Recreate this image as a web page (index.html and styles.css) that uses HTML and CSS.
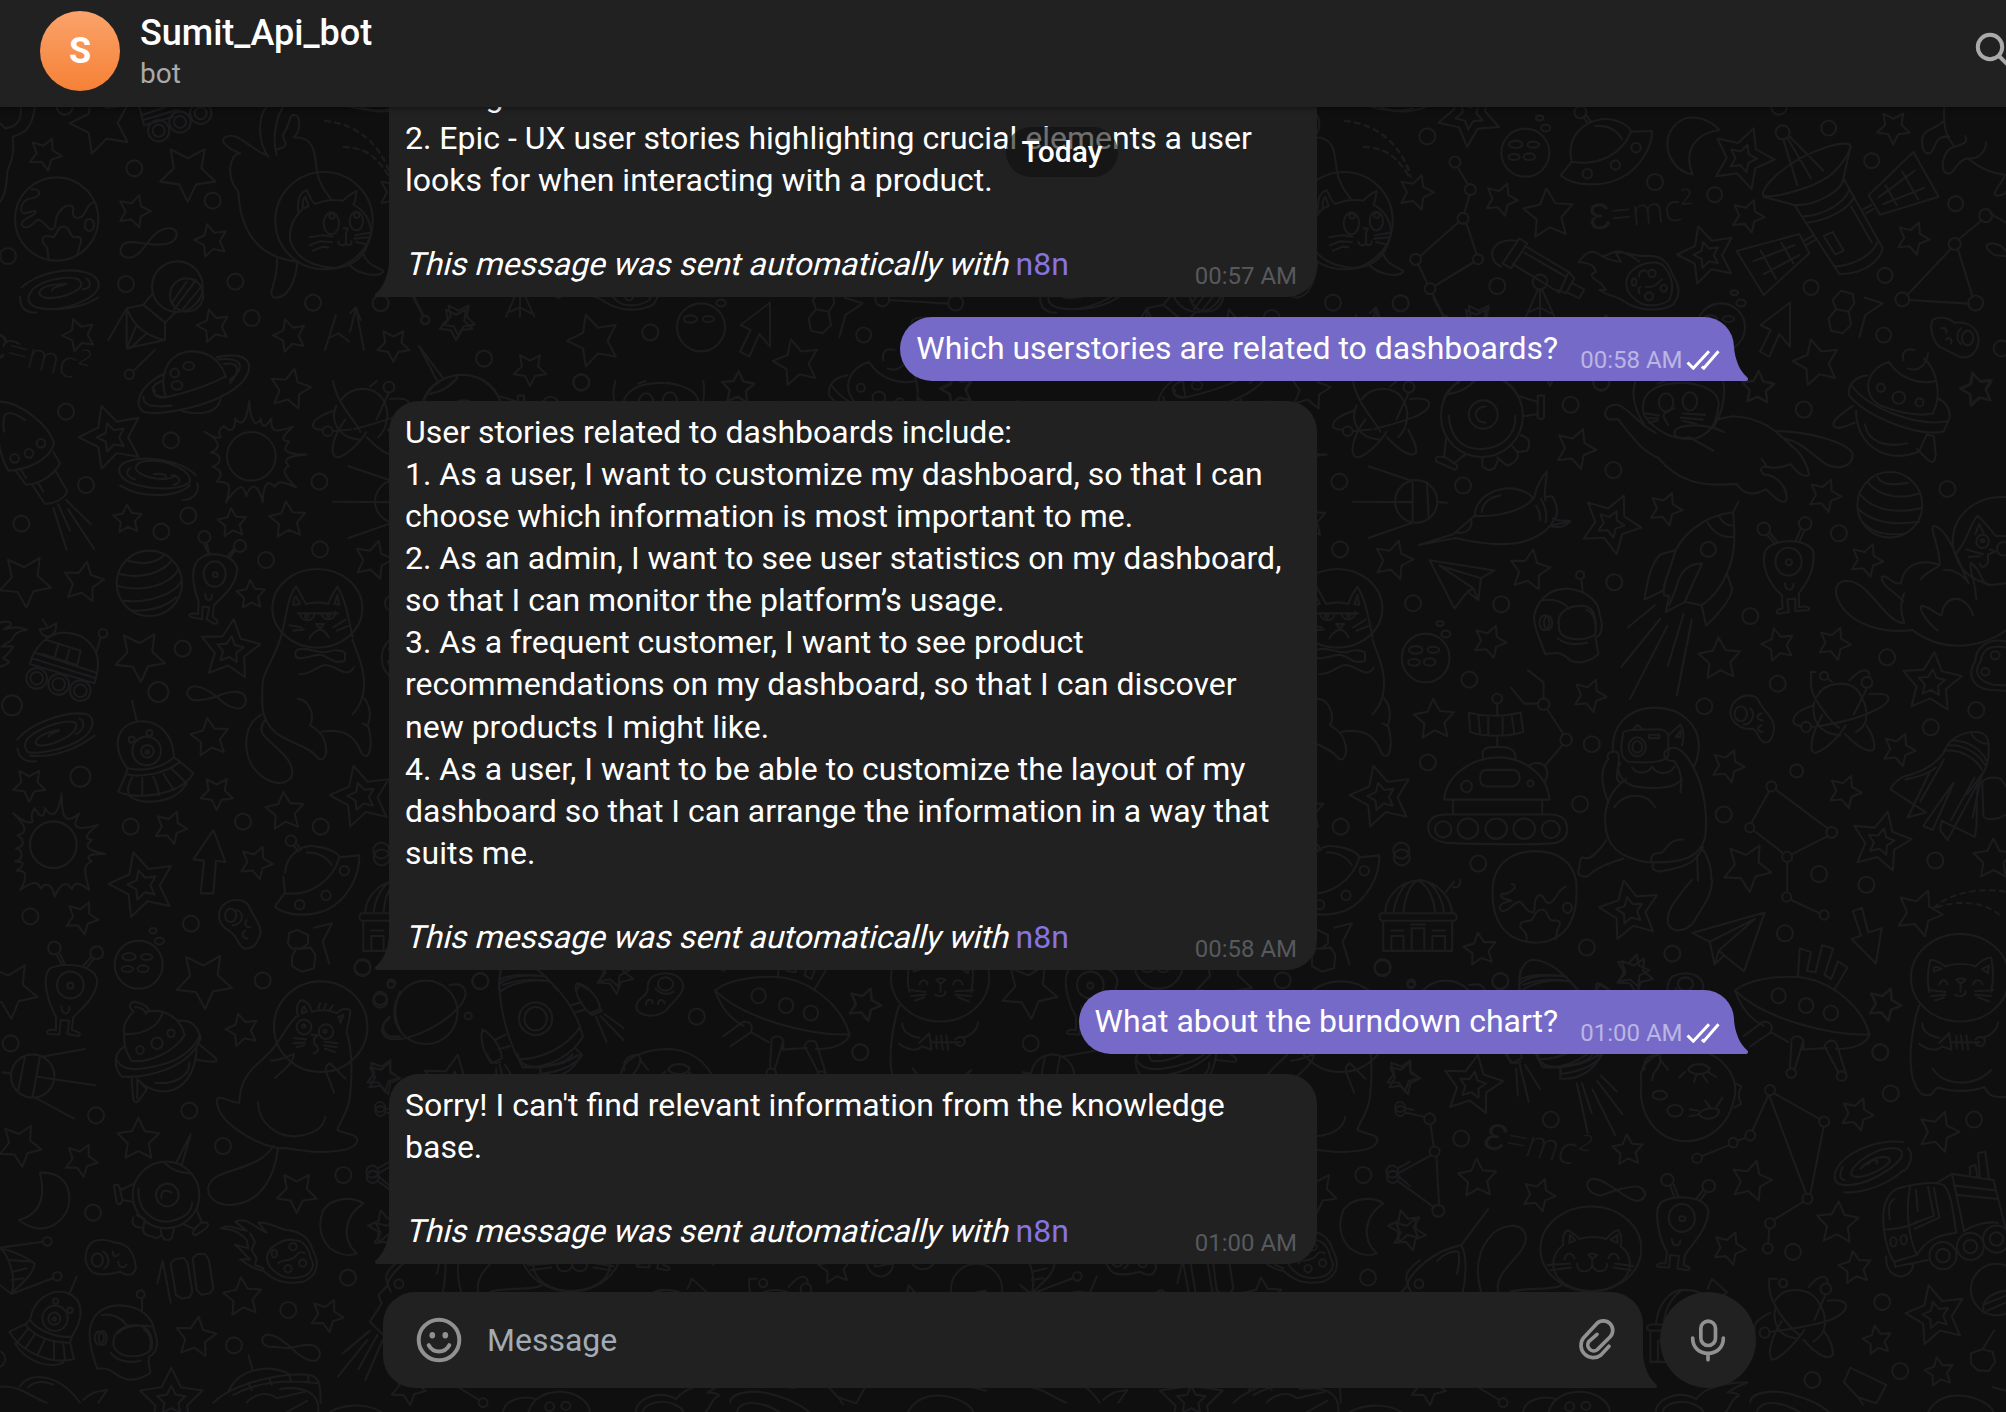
FILE: index.html
```html
<!DOCTYPE html>
<html lang="en">
<head>
<meta charset="utf-8">
<title>Sumit_Api_bot</title>
<link rel="stylesheet" href="styles.css">
</head>
<body>
<svg class="wallpaper" id="wallpaper" aria-hidden="true"></svg>
<div class="chat">
  <header class="topbar">
    <div class="avatar">S</div>
    <div class="peer">
      <div class="peer-name">Sumit_Api_bot</div>
      <div class="peer-status">bot</div>
    </div>
    <svg class="search" viewBox="0 0 40 40"><circle cx="16" cy="16" r="12.2"/><path d="M25 25L37 37"/></svg>
  </header>

  <main class="messages">
    <div class="date-pill">Today</div>

    <div class="bubble in">management.<br>2. Epic - UX user stories highlighting crucial elements a user<br>looks for when interacting with a product.<br><br><em>This message was sent automatically with </em><a class="link">n8n</a>
      <span class="time">00:57 AM</span>
      <svg class="tail" viewBox="0 0 9 17"><path d="M3 17h6V0c-.193 2.84-.876 5.767-2.05 8.782-.904 2.325-2.446 4.485-4.625 6.48A1 1 0 003 17z"/></svg>
    </div>

    <div class="bubble out"><span>Which userstories are related to dashboards?</span>
      <span class="meta"><span class="time">00:58 AM</span><svg class="ticks" viewBox="0 0 34 20"><path d="M1.5 12.5L7.3 18.2L23 1.3M15.8 16.6L17.8 18.2L32.5 1.3"/></svg></span>
      <svg class="tail" viewBox="0 0 9 17"><path d="M6 17H0V0c.193 2.84.876 5.767 2.05 8.782.904 2.325 2.446 4.485 4.625 6.48A1 1 0 016 17z"/></svg>
    </div>

    <div class="bubble in">User stories related to dashboards include:<br>1. As a user, I want to customize my dashboard, so that I can<br>choose which information is most important to me.<br>2. As an admin, I want to see user statistics on my dashboard,<br>so that I can monitor the platform’s usage.<br>3. As a frequent customer, I want to see product<br>recommendations on my dashboard, so that I can discover<br>new products I might like.<br>4. As a user, I want to be able to customize the layout of my<br>dashboard so that I can arrange the information in a way that<br>suits me.<br><br><em>This message was sent automatically with </em><a class="link">n8n</a>
      <span class="time">00:58 AM</span>
      <svg class="tail" viewBox="0 0 9 17"><path d="M3 17h6V0c-.193 2.84-.876 5.767-2.05 8.782-.904 2.325-2.446 4.485-4.625 6.48A1 1 0 003 17z"/></svg>
    </div>

    <div class="bubble out"><span>What about the burndown chart?</span>
      <span class="meta"><span class="time">01:00 AM</span><svg class="ticks" viewBox="0 0 34 20"><path d="M1.5 12.5L7.3 18.2L23 1.3M15.8 16.6L17.8 18.2L32.5 1.3"/></svg></span>
      <svg class="tail" viewBox="0 0 9 17"><path d="M6 17H0V0c.193 2.84.876 5.767 2.05 8.782.904 2.325 2.446 4.485 4.625 6.48A1 1 0 016 17z"/></svg>
    </div>

    <div class="bubble in">Sorry! I can't find relevant information from the knowledge<br>base.<br><br><em>This message was sent automatically with </em><a class="link">n8n</a>
      <span class="time">01:00 AM</span>
      <svg class="tail" viewBox="0 0 9 17"><path d="M3 17h6V0c-.193 2.84-.876 5.767-2.05 8.782-.904 2.325-2.446 4.485-4.625 6.48A1 1 0 003 17z"/></svg>
    </div>
  </main>

  <footer class="composer">
    <div class="field">
      <svg class="icon smile" viewBox="0 0 48 48"><circle cx="24" cy="24" r="20.3"/><path d="M13.7 29.2C18.5 37.6 29.5 37.6 34.3 29.2"/><ellipse class="eye" cx="17.3" cy="19.2" rx="2.8" ry="3.2"/><ellipse class="eye" cx="30.3" cy="19.2" rx="2.8" ry="3.2"/></svg>
      <span class="placeholder">Message</span>
      <svg class="icon clip" viewBox="49 97 122 136"><path d="M148 185L124 211A37 37 0 0 1 72 159L111 117A28 28 0 0 1 151 157L113 195A18 18 0 0 1 87 171L112 149"/></svg>
      <svg class="tail" viewBox="0 0 9 17"><path d="M6 17H0V0c.193 2.84.876 5.767 2.05 8.782.904 2.325 2.446 4.485 4.625 6.48A1 1 0 016 17z"/></svg>
    </div>
    <div class="mic"><svg class="icon" viewBox="385 95 120 138"><rect x="423.5" y="107.5" width="44" height="73" rx="22"/><path d="M399 158C399 188 420 204 445 204C470 204 491 188 491 158M445 204V223"/></svg></div>
  </footer>
</div>
<script src="wallpaper.js"></script>
</body>
</html>
```

FILE: styles.css
```css
* { box-sizing: border-box; }

body {
  margin: 0;
  background: #0f0f0f;
  color: #fff;
  font-family: Roboto, "Liberation Sans", sans-serif;
  overflow: hidden;
}

.wallpaper {
  position: absolute;
  left: 0;
  top: 0;
  width: 2006px;
  height: 1412px;
  fill: none;
  stroke: #1c1c1e;
  stroke-width: 2.1;
  stroke-linecap: round;
  stroke-linejoin: round;
}
.wallpaper * { vector-effect: non-scaling-stroke; }
.wallpaper text {
  fill: #1c1c1e;
  stroke: none;
  font: 300 40px "Open Sans", sans-serif;
}

.chat {
  position: relative;
  display: flex;
  flex-direction: column;
  width: 2006px;
  height: 1412px;
}

.topbar {
  position: relative;
  z-index: 2;
  flex: none;
  display: flex;
  align-items: flex-start;
  height: 107px;
  padding: 11px 0 0 40px;
  background: #212121;
  box-shadow: 0 2px 4px rgba(0, 0, 0, .35);
}
.avatar {
  display: grid;
  place-items: center;
  width: 80px;
  height: 80px;
  border-radius: 50%;
  background: linear-gradient(#faa36b, #f68136);
  font-size: 36px;
  font-weight: 700;
}
.peer { margin-left: 20px; }
.peer-name {
  font-size: 36px;
  font-weight: 500;
  line-height: 44px;
}
.peer-status {
  color: #aaa;
  font-size: 28px;
  line-height: 38px;
}
.search {
  width: 40px;
  height: 40px;
  margin: 20px -8px 0 auto;
  flex: none;
  fill: none;
  stroke: #aaa;
  stroke-width: 4;
}

.messages {
  position: relative;
  flex: 1;
  min-height: 0;
  display: flex;
  flex-direction: column;
  justify-content: flex-end;
  gap: 20px;
  width: 1345px;
  margin-left: 389px;
  padding-bottom: 28px;
}

.date-pill {
  position: absolute;
  z-index: 1;
  left: 617px;
  top: 20px;
  width: 112px;
  height: 50px;
  border-radius: 25px;
  background: rgba(15, 15, 15, .6);
  font-size: 30px;
  font-weight: 500;
  line-height: 50px;
  text-align: center;
}

.bubble {
  position: relative;
  flex: none;
  font-size: 32px;
  line-height: 42.04px;
  padding: 10px 16px 12px;
  white-space: nowrap;
}
.bubble.in {
  align-self: flex-start;
  width: 928px;
  background: #212121;
  border-radius: 30px 30px 30px 0;
}
.bubble.out {
  align-self: flex-end;
  display: flex;
  justify-content: space-between;
  height: 64px;
  background: #766ac8;
  border-radius: 32px 30px 0 32px;
}
/* Slanted upright letters keep the advance widths of the body text. */
.bubble em {
  display: inline-block;
  font-style: normal;
  white-space: pre;
  transform: skewX(-14deg);
  transform-origin: 0 32px;
}
.link { color: #8774e1; }

.time {
  font-size: 24px;
  line-height: 28px;
}
.in .time {
  position: absolute;
  right: 20px;
  bottom: 7px;
  color: #56595e;
}
.meta {
  display: flex;
  align-items: center;
  align-self: flex-end;
  height: 28px;
  margin: 0 -2px -5px 22px;
}
.out .time { color: #bbb5e4; }
.ticks {
  width: 34px;
  height: 20px;
  margin-left: 3.5px;
  fill: none;
  stroke: #fff;
  stroke-width: 3;
}

.tail {
  position: absolute;
  bottom: 0;
  width: 18px;
  height: 34px;
}
.in .tail { right: 100%; fill: #212121; }
.out .tail { left: 100%; fill: #766ac8; }

.composer {
  flex: none;
  display: flex;
  gap: 17px;
  height: 120px;
  padding-left: 383px;
}
.field {
  position: relative;
  display: flex;
  align-items: center;
  width: 1260px;
  height: 96px;
  padding: 0 26px 0 32px;
  background: #212121;
  border-radius: 32px 32px 0 32px;
}
.field .tail { left: 100%; fill: #212121; }
.icon {
  fill: none;
  stroke: #919191;
  stroke-linecap: round;
}
.smile { width: 48px; height: 48px; stroke-width: 4; }
.smile .eye { fill: #919191; stroke: none; }
.placeholder {
  flex: 1;
  margin-left: 24px;
  color: #a2acb4;
  font-size: 32px;
}
.clip { width: 40.7px; height: 45.3px; stroke-width: 11; }
.mic {
  display: grid;
  place-items: center;
  width: 96px;
  height: 96px;
  border-radius: 50%;
  background: #212121;
}
.mic .icon { width: 40px; height: 46px; stroke-width: 11; }
```

FILE: wallpaper.js
```js
// Space doodles. The tile is 1020px wide and repeats across the chat.
// Every sheet has its own origin (ox, oy) and units per pixel (kx, ky).
const sheets = [
  {
    ox: 0, oy: 0, kx: 3, ky: 3,
    dots: [[194,320],[403,505],[638,602],[24,768],[378,852],[706,845],[939,908],[1142,910],[755,954]],
    stars: [[305,370,32,-18],[135,462,17,25],[563,518,29,36],[402,634,17,18],[634,722,17,-15],[237,1005,17,-20],[640,978,17,-15],[870,1007,17,-17],[1180,1035,17,36]],
    art: `
      <circle cx="170" cy="657" r="125"/>
      <path d="M95 568C125 565 125 590 95 595C60 600 55 640 75 640C100 635 110 625 105 640C90 655 65 655 65 675C75 690 90 680 105 665C120 650 130 670 150 688C175 690 160 660 175 640C190 615 215 610 220 625C215 650 225 660 245 650C260 640 260 610 280 608"/>
      <path d="M145 775C140 750 150 750 130 730C120 705 140 705 160 712C175 700 170 680 190 680C210 680 205 700 220 712C250 705 245 725 238 740L232 765"/>
      <ellipse cx="268" cy="675" rx="14" ry="18"/>
      <path d="M400 770C370 780 355 760 365 740C375 718 410 728 445 732C480 736 525 735 530 705C530 680 500 680 475 695C445 712 435 755 400 770Z"/>
      <path d="M65 862C110 820 200 800 260 818C310 835 305 870 265 895C210 925 150 935 110 922C75 910 80 885 105 862C140 835 210 828 235 838C255 855 240 870 200 885C170 897 125 900 118 880C120 862 150 852 200 852M155 872C160 860 175 858 190 856M248 868C275 865 275 845 258 835M60 890C60 925 80 938 108 938M125 925C200 935 260 915 295 892"/>
      <circle cx="532" cy="860" r="76"/><circle cx="560" cy="885" r="50"/>
      <path d="M515 910L560 845M522 928L588 840M545 932L602 862M458 880L430 914L380 925L325 1020M430 914L495 968L525 938M495 968V1020L380 1045V925C400 975 440 1010 495 1020M380 1045L410 975M390 1045L440 1000"/>
      <circle cx="972" cy="662" r="146"/>
      <path d="M895 635C890 590 905 575 920 570C930 590 935 605 945 612C980 598 1005 598 1030 602C1040 590 1060 578 1070 573C1068 590 1066 605 1060 614C1090 630 1110 660 1114 695C1105 750 1075 795 1010 805C940 800 890 780 870 720C868 680 880 655 905 630M908 622C908 600 912 592 916 590L926 618L908 626"/>
      <ellipse cx="994" cy="670" rx="23" ry="33"/><ellipse cx="1069" cy="663" rx="20" ry="28"/><circle cx="996" cy="648" r="8"/><circle cx="1070" cy="646" r="8"/>
      <path d="M1030 685H1044L1038 700V725M1015 725C1018 740 1035 738 1038 728C1042 740 1056 736 1054 724M928 712L968 706L998 710M930 736L960 724L996 726M938 752L968 740L984 742M1065 706L1108 698M1062 716L1105 712M1068 726L1095 732"/>
      <path d="M800 465C760 455 720 400 685 408C655 415 670 440 720 460C690 460 675 530 715 575C720 680 760 770 892 785M805 470C770 420 775 350 800 320M830 465C815 410 830 350 850 320M830 448C870 440 855 430 848 405C870 380 865 340 885 345C905 350 900 400 880 412C940 410 945 450 950 510C955 550 980 580 995 600M830 770C840 830 800 880 820 892C860 900 885 850 892 790M1088 757C1100 800 1140 800 1150 815C1140 830 1080 830 1045 792"/>
      <path stroke-dasharray="5 5" d="M975 363C1060 370 1130 420 1170 515M1030 441C1090 440 1130 470 1165 525"/>
      <path d="M418 320L432 376L520 350M425 345L500 320M430 360L530 330M105 320C95 390 70 400 38 410C45 470 30 490 22 515C20 560 15 590 0 605M62 320C65 350 60 380 15 385L0 370"/>
      <circle cx="476" cy="392" r="32"/><circle cx="476" cy="392" r="18"/><circle cx="540" cy="366" r="32"/><circle cx="540" cy="366" r="18"/><circle cx="602" cy="340" r="32"/><circle cx="602" cy="340" r="18"/>
      <path d="M975 1050L1008 945M1050 995L1068 925L1092 1050M985 1015L1015 1000L1048 1025M1240 895L1270 948"/><circle cx="1275" cy="960" r="13"/>
      <path d="M10 1040C15 1020 40 1018 58 1032M1050 320C1110 335 1150 335 1180 325"/>`
  },
  {
    ox: 0, oy: 350, kx: 3, ky: 3,
    dots: [[198,185],[513,271],[258,405],[64,521],[484,545],[565,497],[958,395],[960,598],[798,630],[548,896],[475,1026,10],[36,1066,10],[241,1280,10],[392,1430],[729,1415],[962,1430],[1144,1502]],
    stars: [[335,262,33,-18,1],[870,118,21,12],[383,508,15,-3],[697,519,15,-5],[863,511,19,-5],[75,692,27,33],[250,697,21,10],[1120,630,20,16],[753,735,15,-3],[420,918,26,34],[690,900,31,7,1],[630,1163,20,-8],[88,1304,17,36],[650,1329,17,36],[1085,1340,32,-15,1],[855,1385,20,-5],[511,1432,17,23],[768,1538,17,23],[428,1605,34,-16,1]],
    art: `
      <text transform="translate(-50 18) rotate(14) scale(2.75)">Ɛ=mc²</text>
      <path d="M465 0L400 62"/><circle cx="388" cy="73" r="14"/>
      <path d="M498 142C480 90 490 20 560 5C610 0 660 20 678 82M650 22C700 10 745 15 748 50C745 100 680 140 600 165C530 185 460 195 430 185C400 165 415 110 490 72M672 42C715 35 725 60 690 100M675 80C620 110 550 130 498 142C455 140 440 110 488 92M655 28C740 20 730 60 690 90M430 140C430 170 460 172 515 167M545 183C590 195 650 195 662 148M465 120C455 140 480 146 498 142"/>
      <ellipse cx="566" cy="48" rx="16" ry="12"/><circle cx="524" cy="69" r="13"/><ellipse cx="531" cy="106" rx="16" ry="13"/>
      <circle cx="754" cy="319" r="73"/>
      <path d="M613 245C640 262 650 265 662 262C655 245 655 240 672 228C690 248 705 245 706 206C720 225 738 230 748 153C752 225 770 230 782 206C785 235 795 235 814 206C812 245 820 250 878 230C845 262 840 270 868 275C845 300 850 312 920 314C855 318 850 330 866 348C840 360 860 385 888 412C850 395 835 390 824 410C805 390 790 395 788 457C775 400 755 395 738 438C732 405 720 395 678 457C698 400 685 395 650 395C670 375 665 360 638 350C668 340 665 310 632 308C665 295 660 270 613 245Z"/>
      <path d="M-10 155C60 150 150 230 162 280C150 330 80 360 25 362C0 320 0 290 -10 250M12 245C5 190 15 170 76 210M160 305L180 340C160 380 110 405 78 404L45 360M62 358L78 384M165 360L202 424C190 450 160 462 135 462L95 402M112 396L130 424M160 474L200 600M174 462L210 542M204 478L282 596M198 450L272 522"/>
      <circle cx="123" cy="280" r="13"/><circle cx="87" cy="310" r="13"/><circle cx="44" cy="325" r="13"/>
      <path d="M588 375C540 330 440 315 380 335C340 350 355 390 410 405C470 420 550 420 570 395C575 365 510 330 450 332C400 335 395 360 430 375C470 392 520 390 525 375M405 388C380 380 375 365 390 355M498 385C500 370 480 370 462 372M514 376C550 380 540 400 520 405M360 406C420 445 530 445 570 405M592 400C600 430 575 450 548 450"/>
      <circle cx="448" cy="700" r="98"/>
      <path d="M378 630C430 650 480 635 492 612M358 672C430 690 490 665 516 630M352 708C440 730 510 700 535 660M370 752C440 760 520 735 543 695M395 782C450 785 500 770 528 742"/>
      <circle cx="613" cy="561" r="18"/><circle cx="720" cy="588" r="18"/>
      <path d="M620 580L628 612M612 582L624 608M706 600L690 622M700 598L684 618M605 622C630 605 700 610 712 655C710 700 680 730 642 765L638 800C660 815 655 825 640 820L620 808L628 772L608 770L606 808L575 802C560 795 570 788 594 792L596 755C575 700 570 640 605 622Z"/>
      <ellipse cx="644" cy="672" rx="33" ry="38"/><circle cx="646" cy="674" r="7"/><path d="M616 732C616 758 636 755 636 734"/>
      <ellipse cx="952" cy="775" rx="135" ry="118"/>
      <path d="M845 850C860 800 862 740 888 710C902 730 908 745 918 762C945 755 965 755 985 762C990 745 1002 725 1012 710C1035 745 1045 800 1058 862M880 765C880 750 884 742 888 740L900 762ZM1003 762L1012 735L1018 765ZM893 790H1015M900 792C905 818 945 815 942 792M965 792C968 815 1008 812 1006 785M948 822H972L960 836ZM928 866C935 850 950 842 960 838C970 842 980 848 986 862M868 826L905 832M880 842L912 838M1000 832L1038 808M1010 842L1045 828"/>
      <circle cx="920" cy="798" r="5"/><circle cx="986" cy="795" r="5"/>
      <path d="M845 850C830 920 785 970 788 1000C785 1060 780 1110 830 1150C870 1180 930 1190 950 1220C970 1245 985 1210 975 1180C970 1150 945 1135 930 1125C945 1100 930 1050 893 1046M1058 870C1075 920 1095 960 1092 1010C1090 1050 1075 1075 1058 1093M965 1145C1030 1135 1065 1155 1085 1210C1110 1240 1120 1180 1105 1130L1088 1120M1092 1045C1115 1070 1112 1110 1102 1128M785 1094C730 1120 730 1200 755 1245C790 1300 850 1315 875 1280C890 1230 820 1190 795 1160C780 1145 780 1130 795 1110M900 925C885 925 880 905 895 898C930 890 960 915 985 905C1010 895 1035 905 1035 910V932C1000 945 985 920 965 915C940 912 930 925 895 925M898 972C935 975 945 950 975 945C1010 945 1040 990 1062 952"/>
      <path d="M90 940C100 900 140 845 195 848C260 850 305 900 292 965L284 1000L90 942M95 925L288 985M105 908L290 968M140 870L242 902L232 945L125 912M175 884L164 922M210 892L198 935M118 838C140 840 160 825 168 820C172 850 150 868 128 855ZM140 828L128 808M290 905L302 862"/>
      <circle cx="309" cy="850" r="13"/><circle cx="110" cy="985" r="31"/><circle cx="110" cy="985" r="19"/><circle cx="176" cy="1003" r="31"/><circle cx="176" cy="1003" r="19"/><circle cx="241" cy="1022" r="31"/><circle cx="241" cy="1022" r="19"/>
      <path d="M0 818C25 810 35 818 32 825L12 838C45 830 60 830 80 840C50 842 40 855 35 870C20 880 10 885 5 890C25 888 35 888 40 890C30 905 20 915 10 925L28 935C20 945 10 948 0 950"/>
      <path d="M600 1050C570 1055 555 1035 565 1018C580 1000 610 1010 650 1040C690 1080 735 1090 738 1050C735 1020 700 1020 660 1035C640 1045 620 1048 600 1050Z"/>
      <path d="M52 1168C90 1120 200 1080 260 1093C290 1105 280 1145 240 1170C190 1200 110 1215 82 1205C65 1180 80 1160 120 1140C160 1118 215 1108 228 1120C235 1145 200 1165 160 1180C130 1190 105 1190 107 1175C115 1155 150 1145 175 1140M145 1160C150 1150 165 1146 178 1142M228 1152C255 1140 255 1110 238 1106M52 1195C55 1225 80 1238 108 1234M90 1217C170 1225 240 1190 284 1156"/>
      <path d="M410 1112L396 1052M382 1255C340 1200 340 1130 410 1115C480 1105 520 1160 522 1222C485 1255 430 1265 382 1255ZM382 1255L378 1272C420 1285 500 1270 540 1235L522 1222M378 1272L355 1325C400 1350 540 1340 580 1270L540 1235M397 1282C385 1300 382 1320 386 1332M427 1284V1338M460 1280C470 1300 475 1320 478 1336M490 1272L522 1320M515 1256L560 1300M385 1335C420 1370 530 1360 560 1300"/>
      <circle cx="440" cy="1203" r="43"/><circle cx="442" cy="1204" r="19"/><circle cx="442" cy="1206" r="5"/><circle cx="395" cy="1169" r="9"/><circle cx="448" cy="1149" r="9"/>
      <circle cx="160" cy="1484" r="70"/>
      <path d="M40 1390C70 1418 90 1420 98 1415C92 1395 95 1388 104 1374C120 1405 135 1405 134 1374C155 1405 175 1400 185 1330C185 1405 195 1425 238 1390C215 1430 220 1445 294 1425C255 1455 250 1465 276 1470C250 1490 260 1500 316 1512C265 1510 255 1520 275 1534C250 1545 250 1560 268 1620C235 1595 225 1595 215 1618C200 1590 180 1600 165 1640C155 1600 135 1595 122 1616C112 1590 95 1595 60 1620C85 1580 80 1560 50 1562C75 1545 75 1535 45 1534C72 1530 70 1500 48 1495C75 1490 75 1470 52 1455C85 1450 80 1430 40 1390Z"/>
      <path d="M640 1440L676 1536L648 1532L640 1630H602L612 1532L580 1528Z"/>
      <path d="M855 1568C860 1510 910 1480 950 1490C990 1495 1015 1510 1018 1522L1078 1516C1080 1580 1040 1650 980 1680C930 1700 860 1700 824 1670L855 1628L850 1580M855 1630C930 1640 1000 1590 1018 1522M920 1508C950 1505 980 1520 995 1545M884 1490L895 1505M892 1484L903 1500"/>
      <circle cx="873" cy="1472" r="16"/><circle cx="1033" cy="1562" r="14"/><circle cx="978" cy="1636" r="14"/><circle cx="899" cy="1664" r="14"/>`
  },
  {
    ox: 0, oy: 880, kx: 3, ky: 3,
    dots: [[91,109],[573,131],[788,301],[1088,261],[1141,355,6.5],[1174,310,4],[32,490],[568,692],[288,706],[669,798],[1030,885],[279,998],[1044,1193],[865,1290],[702,1396],[-8,1437],[1140,681,5],[1117,875,6]],
    stars: [[245,113,17,26],[612,300,29,34],[28,330,29,32],[727,450,17,-15],[1148,585,17,28],[60,795,22,30],[243,840,17,27],[415,780,22,0],[890,936,21,36],[728,1252,20,-5],[980,1306,17,26],[587,1372,21,8],[514,1562,33,0,1],[1155,1040,17,-15]],
    art: `
      <circle cx="163" cy="204" r="19"/><circle cx="290" cy="218" r="19"/>
      <path d="M170 224L186 254M180 222L194 252M272 232L250 258M280 238L262 262M150 265C190 248 280 250 292 300C290 350 250 380 220 412L215 450C240 455 245 465 235 468L202 462L208 422L182 420L178 464L145 462C135 455 145 446 168 450L168 410C140 360 125 290 150 265Z"/>
      <circle cx="211" cy="315" r="40"/><circle cx="211" cy="317" r="9"/><path d="M184 378C186 410 210 405 208 380"/>
      <circle cx="416" cy="254" r="72"/><ellipse cx="387" cy="230" rx="20" ry="11"/><ellipse cx="440" cy="231" rx="17" ry="9"/><ellipse cx="382" cy="267" rx="17" ry="9"/><ellipse cx="429" cy="266" rx="17" ry="10"/><ellipse cx="478" cy="183" rx="14" ry="10"/><ellipse cx="459" cy="152" rx="11" ry="8"/>
      <path d="M660 90C680 50 730 55 745 75C760 110 790 145 780 165C770 190 765 205 735 206C710 195 715 170 690 155C665 140 650 120 660 90ZM708 90C735 95 730 135 698 136M740 120C730 135 740 142 752 142M735 152C722 162 730 175 742 176"/><ellipse cx="692" cy="106" rx="17" ry="20"/>
      <path d="M893 150L924 165V190L905 206L875 205L864 190L868 158ZM905 206L932 203L946 225L942 265L905 275L876 258V230L886 210M942 143L996 130L968 185L988 252"/>
      <path d="M373 462C365 430 395 400 400 395C375 370 400 360 420 370C450 380 450 400 440 395C490 385 540 410 554 465C520 520 440 550 394 542C370 500 372 480 373 462ZM375 462C430 465 475 440 486 402M405 382C420 380 435 388 438 402M373 500C340 520 340 560 365 590C450 595 570 560 602 475C590 430 570 420 535 422M350 540C370 580 430 570 500 550C560 530 590 490 600 465M412 598C470 660 580 650 590 508M465 608C520 615 570 590 568 548M600 495L648 535C655 550 640 546 590 540M395 595L400 660C410 675 415 665 440 628L412 598V655"/>
      <ellipse cx="420" cy="510" rx="11" ry="12"/><circle cx="471" cy="490" r="17"/><circle cx="513" cy="460" r="11"/>
      <circle cx="98" cy="588" r="65"/><path d="M75 530L55 630M120 530L98 650M8 577L32 580M112 590L285 616M125 530L255 507M104 652L222 716"/>
      <ellipse cx="962" cy="440" rx="140" ry="136"/>
      <path d="M895 410C885 380 895 365 905 360C925 365 935 385 935 395C965 388 990 390 1010 400C1025 385 1040 385 1050 390C1052 420 1040 440 1040 455C1060 520 1055 600 1050 650C1045 700 1015 730 1012 750C1040 765 1075 760 1072 785C1060 810 1020 815 960 816C900 815 860 800 835 805C760 790 640 720 652 655C665 645 695 670 718 668C720 580 770 560 800 525C840 490 850 450 888 410M906 400C905 385 910 380 913 380L920 395ZM1015 410L1030 405L1022 428ZM955 385L960 370M972 385L978 372M988 390L998 376"/>
      <circle cx="912" cy="441" r="22"/><circle cx="911" cy="438" r="5"/><circle cx="978" cy="455" r="22"/><circle cx="975" cy="454" r="5"/>
      <path d="M934 464L954 466L942 476V490C955 500 960 515 942 520M882 474L918 478M880 490L915 488M890 502L912 496M975 485L1012 490M972 496L1010 502M975 506L1005 516M813 542C840 540 860 530 882 522C880 550 850 570 825 594M1036 596L990 550C975 555 975 575 980 580L1002 638M774 665C775 730 830 770 885 769C930 765 970 750 976 710M820 798C770 880 640 860 625 920C620 960 660 975 690 975C790 970 825 880 834 805"/>
      <path d="M120 878C180 875 210 910 208 960C205 1010 165 1045 120 1046C90 1043 75 1035 57 1020C130 1000 135 940 120 878ZM1090 970C1060 950 1000 950 970 990C950 1040 965 1080 990 1105C1020 1125 1050 1130 1070 1120C1025 1080 1030 1010 1090 970Z"/>
      <circle cx="498" cy="945" r="100"/><circle cx="502" cy="945" r="34"/>
      <path d="M485 955C480 935 495 925 515 938M416 925C410 1000 470 1030 510 1024C550 1015 575 1000 576 968M528 850L572 763L545 856M495 850C520 875 550 880 575 880M400 912L362 930M400 966L368 960M342 920L350 968C360 978 368 968 366 955L358 920C352 912 342 912 342 920ZM590 988L605 1028L620 1028C630 1035 625 1042 588 1065C575 1068 572 1052 605 1028M550 1032L585 1048M400 1012C390 1035 410 1045 430 1042L435 1018L410 1005M430 1042C425 1070 450 1065 470 1075L485 1065L482 1048M485 1065C490 1080 500 1085 515 1075L522 1048"/>
      <path d="M265 1100C280 1075 310 1075 345 1088C390 1090 405 1130 408 1165C400 1190 380 1188 360 1175C340 1180 310 1190 280 1178C255 1160 250 1130 265 1100ZM310 1115C330 1130 330 1155 312 1165M338 1115C338 1130 350 1132 356 1122M355 1145C355 1165 375 1165 380 1154"/><ellipse cx="292" cy="1140" rx="17" ry="20"/>
      <path d="M472 1210L488 1142L512 1268M512 1150L525 1137L552 1134L563 1150L577 1235L568 1252L545 1256L528 1245ZM578 1135L592 1122L615 1122L627 1140L640 1225L630 1240L605 1244L590 1230Z"/>
      <path d="M662 1045C690 1030 700 1045 740 1052L705 1025C740 1010 760 1040 800 1058L775 1028C810 1025 830 1045 860 1050C910 1055 930 1080 938 1110C965 1160 945 1190 910 1205C850 1215 820 1200 790 1172C760 1170 740 1150 720 1138L750 1138C730 1120 725 1110 705 1094L745 1105L740 1080C715 1050 690 1048 662 1045ZM820 1100C840 1085 860 1075 880 1080C910 1080 925 1100 932 1135C950 1160 930 1185 900 1192C860 1198 835 1190 810 1160C795 1140 800 1115 820 1100ZM750 1060L765 1085L755 1110L770 1135L765 1155L790 1165M835 1150C845 1135 870 1150 890 1125C895 1115 905 1115 915 1120"/><circle cx="879" cy="1100" r="11"/><circle cx="908" cy="1149" r="11"/><circle cx="864" cy="1166" r="11"/><ellipse cx="823" cy="1121" rx="8" ry="12"/>
      <path d="M0 1103L128 1085M0 1103C30 1130 50 1200 34 1242L0 1215M34 1242L158 1195M0 1103C40 1115 80 1130 104 1150C100 1190 50 1220 34 1242M30 1140L95 1145M38 1175L80 1165M35 1200L70 1195"/><circle cx="142" cy="1084" r="13"/><circle cx="172" cy="1189" r="13"/>
      <path d="M230 1190L210 1238M90 1320C100 1260 150 1225 200 1238C250 1255 255 1310 215 1370C170 1375 110 1350 90 1320ZM90 1320L76 1332C100 1370 160 1390 210 1388L215 1370M76 1332L28 1355C60 1410 140 1455 222 1438L210 1388M85 1345L50 1390M105 1362L78 1402M135 1378L112 1425M162 1388V1438M190 1392L195 1438M45 1390C80 1450 150 1465 190 1448"/><circle cx="165" cy="1315" r="38"/><circle cx="163" cy="1316" r="18"/><circle cx="163" cy="1317" r="5"/><circle cx="167" cy="1264" r="8"/><circle cx="210" cy="1291" r="8"/>
      <path d="M292 1466C275 1420 265 1380 270 1345C280 1290 330 1270 380 1278C430 1285 460 1320 462 1350C480 1390 470 1420 447 1430C442 1460 455 1478 450 1480C400 1510 370 1500 345 1480C320 1462 310 1465 292 1466ZM305 1305C340 1300 365 1315 380 1335M355 1360C380 1330 430 1335 460 1340M340 1390C340 1350 375 1335 410 1335C450 1340 460 1370 455 1405C440 1430 400 1432 370 1425C345 1415 340 1400 340 1390ZM432 1348C455 1365 455 1390 450 1408M332 1418C350 1445 390 1450 422 1442M426 1255V1296"/><circle cx="422" cy="1243" r="12"/><ellipse cx="298" cy="1374" rx="14" ry="20"/><ellipse cx="308" cy="1374" rx="12" ry="21"/>
      <path d="M820 1400C795 1405 780 1385 790 1370C805 1355 835 1370 870 1400C905 1435 955 1465 960 1420C955 1390 920 1390 880 1402C860 1408 840 1402 820 1400Z"/>
      <path d="M757 1468L746 1427M686 1533C720 1460 810 1455 865 1480M640 1568C700 1510 850 1475 930 1485C965 1495 960 1530 962 1568M700 1545C780 1500 880 1500 955 1510M745 1510L755 1530M808 1495L815 1515M868 1485L873 1505M925 1485V1508M740 1568C760 1545 800 1530 830 1555L915 1535M0 1520C60 1515 90 1550 140 1568M60 1520C80 1480 170 1470 240 1568M85 1522C100 1505 130 1500 160 1514M250 1560C280 1530 300 1535 322 1530L295 1568"/>
      <path d="M1200 335C1180 380 1185 420 1200 450M1170 410C1140 430 1145 465 1175 470H1200M1152 684L1180 690M1133 865L1170 845M1133 887L1170 918"/>
      <path d="M1200 1140C1160 1170 1150 1190 1165 1215L1135 1245L1145 1270L1110 1325L1150 1365M1110 1352L1028 1420M1102 1380L1014 1490M1132 1365L1075 1468M1148 1380L1096 1500"/>`
  },
  {
    ox: 486, oy: 0, kx: 3, ky: 3,
    dots: [[819,320],[968,384,7.5],[1097,482,7.5],[447,546],[626,584,7.5],[1349,611,7.5],[1137,826,7.5],[915,862,7.5],[1133,1005,7.5],[286,1147],[830,397,7],[223,337,6],[1439,647,6.5],[1346,732,6],[1189,898,7],[1409,909,7.5],[1487,1045,8]],
    stars: [[710,475,32,20,1],[1162,382,17,36],[128,643,26,-5],[725,648,17,22],[603,765,30,-17,1],[1220,715,17,22],[932,1088,24,-14],[756,1165,17,3],[1412,1167,17,-15]],
    art: `
      <circle cx="58" cy="458" r="72"/><ellipse cx="29" cy="433" rx="20" ry="11"/><ellipse cx="82" cy="434" rx="17" ry="9"/><ellipse cx="24" cy="471" rx="17" ry="9"/><ellipse cx="70" cy="470" rx="17" ry="10"/><ellipse cx="119" cy="384" rx="14" ry="10"/><ellipse cx="101" cy="354" rx="11" ry="7"/>
      <path d="M197 485C180 410 230 365 290 357C330 355 370 375 375 395L438 393C440 440 400 500 360 525C300 565 200 560 164 526L197 485C280 500 350 460 375 395M268 378C310 375 335 395 348 418M232 352L246 370M240 346L256 366"/><circle cx="390" cy="443" r="14"/><circle cx="328" cy="495" r="14"/><circle cx="244" cy="521" r="14"/>
      <path d="M640 390C610 355 560 345 530 358C480 385 475 440 495 475C510 505 535 520 560 523C530 450 570 400 640 390Z"/>
      <text transform="translate(252 690) rotate(-6) scale(2.75)">Ɛ=mc²</text>
      <path d="M1032 434C1000 420 900 460 850 495C800 530 765 570 772 585C780 600 900 570 950 540C1000 515 1040 445 1032 434ZM772 590L865 615C930 620 1010 570 1012 535L1034 440M865 615L1000 822C1060 825 1120 790 1130 745L1012 535M890 650C950 645 1010 615 1030 570M905 668C965 660 1025 630 1045 590M985 800C1045 795 1100 765 1115 725M1036 620L1098 728M953 708L980 696L1013 752L988 764ZM874 556L832 418M915 535L845 415M952 512L852 410M1072 628L1095 615M1080 640L1104 626M895 722L925 705M902 735L930 718"/>
      <path d="M1088 586L1222 456L1298 590L1122 644ZM1118 592L1226 512M1132 612L1254 564M1138 556L1172 615M1188 513L1236 598M692 753L880 702L910 760L773 885ZM742 784L866 735M774 822L880 765M764 752L810 836M826 728L862 790"/>
      <path d="M1428 660L1356 720M1452 640L1500 668M1336 745L1203 886M1356 748L1400 890M1208 900L1388 911"/>
      <path d="M1005 872L1040 882L1045 910L1028 935L990 928L980 900ZM990 928L968 955L975 992L1010 1000L1035 975L1028 935M1076 893L1130 910L1078 945L1060 1012"/>
      <path d="M852 908L852 1040L820 1002L790 1070L762 1055L794 990L764 975Z"/>
      <circle cx="645" cy="982" r="72"/><ellipse cx="613" cy="957" rx="20" ry="11"/><ellipse cx="667" cy="957" rx="17" ry="9"/><ellipse cx="705" cy="909" rx="14" ry="10"/><ellipse cx="685" cy="878" rx="11" ry="7"/>
      <path d="M1280 960C1300 945 1330 955 1345 968C1390 965 1415 985 1418 1020C1415 1060 1390 1078 1360 1070C1340 1060 1320 1050 1300 1040C1278 1020 1270 980 1280 960ZM1305 985C1315 980 1325 990 1320 998M1320 1020C1325 1010 1340 1015 1335 1030M1365 985C1350 1000 1350 1020 1365 1032"/><ellipse cx="1385" cy="1014" rx="17" ry="22"/>
      <path d="M218 786C250 740 270 755 290 770L325 755C350 750 380 770 400 785M218 786C260 790 265 800 270 815C240 825 270 840 285 850L300 870L280 870C310 890 340 890 355 905C400 935 460 935 500 915C530 880 515 850 500 825C485 780 460 765 420 768C380 770 350 750 330 760L345 785C320 785 290 770 290 770M375 815C400 790 450 775 475 800C500 830 505 870 490 900C460 920 410 925 385 895C355 875 355 835 375 815Z"/><circle cx="438" cy="820" r="11"/><circle cx="473" cy="865" r="10"/><circle cx="429" cy="889" r="12"/><ellipse cx="384" cy="846" rx="7" ry="11"/><path d="M400 830C395 815 415 805 422 815M420 860C450 865 455 845 468 838M400 880C395 870 398 862 404 860"/>
      <path d="M40 715L64 730L15 805L-10 790ZM64 742L188 816L160 878L20 792M55 758L176 828M188 816L205 835L180 880L155 870M200 850L235 868L220 895L185 878M-15 800C-60 780 -50 710 35 722"/><circle cx="102" cy="846" r="22"/><path d="M96 868L60 950M102 868V950M108 868L145 950M72 935L102 922L135 940"/>
      <path d="M1315 320C1310 400 1330 420 1345 440C1390 430 1380 420 1378 408M1312 365C1280 390 1250 390 1248 420C1248 470 1275 470 1285 440C1295 410 1310 410 1330 410M1345 440C1310 450 1305 500 1315 515C1345 540 1345 480 1385 475C1420 480 1440 450 1440 428M1385 475C1430 510 1460 520 1500 525M1495 530C1480 560 1460 575 1468 585C1480 592 1500 580 1500 575M1465 765C1430 740 1440 730 1460 730C1490 735 1500 750 1510 770Z"/>`
  },
  {
    ox: 290, oy: 100, kx: 3, ky: 3,
    dots: [[352,109],[562,558],[272,609],[435,186,5.5],[481,269,5.5],[459,355,5.5],[317,478,5.5],[504,478,5],[360,566,5.5]],
    stars: [[318,277,18,18],[478,45,32,40,1],[573,298,17,22],[506,658,17,36]],
    art: `
      <path d="M443 202L474 254M478 285L463 340M446 366L331 468M470 372L500 464M324 492L353 552M374 558L492 486M368 582L398 645"/>
      <path stroke-dasharray="5 5" d="M105 63C190 70 270 120 302 232M162 141C230 145 260 170 296 228"/>
      <path d="M180 640L198 622L212 660M210 20C260 40 300 38 350 20"/>`
  },
  {
    ox: 370, oy: 90, kx: 3, ky: 3,
    dots: [[342,806],[841,727],[634,878],[166,690,4]],
    stars: [[258,700,17,36],[672,752,27,-18],[480,837,17,36]],
    art: `<path d="M205 880L147 768L222 868M160 930C190 840 350 820 390 930M180 912C215 905 250 885 262 862M132 620L160 676"/>`
  },
  {
    ox: 280, oy: 350, kx: 2.221, ky: 2.958,
    dots: [[601,162],[669,95],[696,355],[362,401],[447,752],[251,749],[698,687],[376,975],[284,1220],[1119,176],[1438,411],[1197,542],[1000,787],[1304,909],[1061,987],[898,1054],[648,1166],[622,1343],[941,1374],[1502,1065],[1401,1116],[1103,1245,6.5],[226,1501],[396,1519],[1411,1510],[1153,1550]],
    stars: [[612,292,21,21],[1017,112,17,3],[1505,118,17,-15],[690,514,31,25,1],[812,470,17,22],[1165,430,17,22],[510,652,21,10],[1258,622,17,22],[421,862,17,22],[1062,872,17,-15],[1186,868,17,22],[932,915,22,-3],[298,1094,21,-3],[643,1022,17,22],[1403,985,31,5,1],[1330,1182,17,22],[950,1230,17,22],[1210,1306,17,22],[1290,1455,31,13,1],[1540,1507,21,0],[993,1530,25,30]],
    art: `
      <path d="M137 145C160 105 210 105 228 145C245 180 240 230 218 258M125 165C110 210 130 260 175 265M118 92C125 160 180 230 178 242M242 125L214 206M245 145C300 135 300 175 250 200C220 215 190 225 165 234M118 240L158 235M120 180C60 205 65 240 95 235M145 205C110 270 110 320 130 317C150 310 180 270 192 242M193 258C230 310 250 315 257 305C262 290 250 260 240 235M200 108L215 92"/><ellipse cx="242" cy="110" rx="12" ry="16"/><ellipse cx="106" cy="240" rx="11" ry="14"/>
      <ellipse cx="404" cy="195" rx="91" ry="122"/><ellipse cx="407" cy="191" rx="32" ry="42"/><path d="M413 167C385 165 382 215 412 215M330 195C335 260 360 295 405 293C450 290 480 250 478 195M488 137L526 152M495 196L526 190M528 135H542V200C540 206 530 206 528 200ZM330 130C355 125 375 110 385 92M325 258L320 315L348 340C352 352 345 356 340 352L303 330C298 315 308 312 320 318M345 332L368 308M490 252C515 260 510 280 505 298L483 302L472 285M483 302C488 325 470 340 460 342L438 318M405 320V345L420 356L432 350L440 325"/>
      <path d="M745 92C735 130 740 170 765 222M765 195C750 130 790 100 835 98C890 95 930 120 930 160C925 210 920 240 880 262C830 270 790 240 765 195M940 92C945 130 940 180 918 230M790 245C750 220 730 170 705 162C680 160 670 190 685 205C700 210 705 195 712 215C740 260 760 300 795 318C840 390 890 405 970 396C985 430 1010 430 1035 412C1050 430 1070 460 1080 445C1085 410 1060 370 1030 368C1015 350 1030 340 1045 348C1070 350 1080 340 1090 338C1100 360 1120 380 1130 370C1130 350 1115 310 1100 293C1070 260 1040 200 960 196L930 205M1055 240C1120 240 1220 270 1228 310C1225 350 1190 355 1165 335C1130 300 1110 270 1075 262M942 243C900 215 850 220 835 235C825 255 840 265 865 258L918 298M1025 322L1035 340"/><ellipse cx="813" cy="155" rx="16" ry="27"/><ellipse cx="866" cy="152" rx="16" ry="27"/><path d="M818 180L832 172M820 180C800 190 808 200 818 222M768 188L798 194M770 202L795 202M775 215L795 208M850 188L900 192M845 200L895 206M850 210L880 218M795 100L812 92M858 96L880 102"/>
      <ellipse cx="258" cy="448" rx="47" ry="63"/><path d="M250 385V510M282 392L286 500M118 449L250 450M152 344L248 387M152 556L248 512M306 450L326 452"/>
      <path d="M388 490C390 430 440 405 475 410C500 415 515 430 518 440C495 475 440 495 388 490L340 545L264 577L345 556C420 580 510 590 556 520L600 507C590 500 575 510 562 498M404 480C405 450 425 435 445 430M345 540C370 545 385 525 380 502M520 438C525 400 540 370 548 360C548 390 540 420 545 445M524 460C532 475 535 490 532 505M535 440C545 460 550 490 545 510M548 435L560 432C570 455 572 475 570 490L556 520M556 520C580 530 590 520 600 507"/>
      <path d="M288 622L432 652L402 675L396 740L372 715L343 765ZM310 638L402 675M310 638L385 705L372 715M385 705L396 740"/>
      <path d="M545 900C530 850 518 810 520 785C530 730 560 705 595 706C640 710 665 750 665 780C675 820 670 845 656 850L663 900C640 925 620 930 600 918C580 890 565 895 545 900ZM538 740C565 735 585 745 598 765M575 815C570 780 590 755 630 757C655 760 660 800 656 840C640 860 600 860 585 845C575 835 575 825 575 815ZM636 768C655 780 658 810 656 830M572 852C590 875 620 872 638 865M625 680L628 716"/><ellipse cx="622" cy="666" rx="9" ry="12"/><ellipse cx="543" cy="807" rx="11" ry="22"/><ellipse cx="551" cy="807" rx="9" ry="21"/>
      <ellipse cx="279" cy="911" rx="53" ry="72"/><ellipse cx="257" cy="887" rx="15" ry="11"/><ellipse cx="296" cy="887" rx="13" ry="9"/><ellipse cx="253" cy="924" rx="13" ry="10"/><ellipse cx="288" cy="923" rx="13" ry="11"/><ellipse cx="324" cy="840" rx="10" ry="10"/><ellipse cx="311" cy="809" rx="8" ry="7"/>
      <path d="M962 480C890 490 840 560 830 610C820 660 805 690 808 725L820 728L812 775L855 745L892 755L902 815C930 780 955 740 960 708L948 660C970 600 965 530 962 480ZM962 480L974 448M905 510C920 545 940 555 963 553M930 490C940 515 950 520 962 520M835 592L800 605C775 640 770 700 765 738L806 712M893 632C850 630 840 680 835 705L820 755M893 632C880 670 865 710 855 745M892 755C920 730 940 690 948 660M788 755L728 821M800 795L714 937M816 816L733 1032M852 780L817 934M870 798L837 1022"/><ellipse cx="907" cy="590" rx="17" ry="22"/>
      <ellipse cx="1030" cy="529" rx="14" ry="19"/><ellipse cx="1122" cy="513" rx="14" ry="19"/><path d="M1038 548L1055 574M1044 542L1062 570M1102 562L1112 530M1110 565L1120 534M1032 600C1040 560 1120 550 1140 595C1145 650 1125 690 1108 720V760C1130 755 1135 768 1128 770L1100 772L1100 735L1082 738L1086 775L1062 780C1055 775 1060 765 1072 765L1070 725C1040 690 1025 640 1032 600ZM1077 690C1078 715 1096 715 1096 692"/><ellipse cx="1085" cy="626" rx="29" ry="41"/><ellipse cx="1086" cy="628" rx="7" ry="9"/>
      <ellipse cx="1310" cy="458" rx="72" ry="97"/><path d="M1283 375C1290 400 1320 400 1350 393M1260 390C1290 440 1340 440 1374 425M1242 425C1280 485 1340 480 1382 467M1240 470C1280 520 1340 515 1375 508M1250 510C1280 550 1310 545 1340 545"/>
      <path d="M1308 35C1250 60 1250 140 1290 165C1340 190 1380 195 1405 188C1430 130 1410 50 1385 25M1308 35C1330 80 1370 105 1412 92M1340 30C1335 0 1350 -5 1365 0M1395 10C1390 50 1370 65 1350 55M1260 75C1230 80 1215 105 1220 135C1260 200 1380 260 1430 240L1443 200C1445 170 1430 150 1415 142M1225 105C1260 170 1370 230 1440 210M1235 180C1235 280 1300 340 1375 300L1392 250M1255 220C1260 270 1300 290 1348 276M1228 165C1200 190 1180 210 1185 225C1195 240 1220 220 1232 215M1392 250L1408 255L1412 310C1408 345 1400 335 1370 292"/><ellipse cx="1290" cy="112" rx="9" ry="12"/><ellipse cx="1330" cy="141" rx="14" ry="18"/><ellipse cx="1376" cy="155" rx="9" ry="12"/>
      <path d="M1568 435C1500 430 1445 490 1450 580C1460 650 1490 680 1535 695L1568 690M1458 600C1485 560 1485 520 1505 490C1520 510 1535 530 1545 550H1568M1500 545L1508 515L1518 540M1480 590L1518 604M1485 612L1510 610M1532 590L1545 596L1528 605V630C1520 645 1512 645 1510 632M1408 520C1395 525 1425 590 1420 638C1400 655 1390 660 1378 678M1408 520C1440 530 1460 620 1485 690M1490 630C1515 650 1510 690 1530 695M1490 630C1485 650 1500 680 1502 738M1430 650C1460 650 1475 670 1485 690M1420 635C1370 615 1340 640 1335 690C1310 695 1310 665 1292 670C1290 700 1320 710 1340 745M1342 720C1330 750 1335 780 1342 808C1300 805 1270 700 1225 685C1190 675 1185 710 1195 740C1220 810 1290 840 1360 828C1420 890 1500 890 1568 830M1416 830C1390 800 1375 770 1380 757C1400 760 1410 780 1425 785C1430 720 1480 720 1495 785"/><ellipse cx="1516" cy="566" rx="14" ry="20"/><circle cx="1516" cy="564" r="4"/><ellipse cx="1562" cy="588" rx="14" ry="20"/>
      <path d="M375 1073C410 1085 450 1085 490 1072L496 1130C460 1145 410 1145 378 1130ZM396 1080L400 1135M418 1082V1140M450 1082V1140M470 1078L476 1135M438 1045V1080M438 1142V1174M406 1208V1188C410 1175 420 1174 440 1174C465 1174 478 1180 479 1208M320 1330C325 1250 390 1205 440 1205C500 1205 550 1260 554 1330ZM340 1332V1370M538 1332V1368M320 1374H555C590 1375 595 1400 593 1425C590 1450 575 1460 550 1460C470 1465 400 1462 325 1458C290 1450 283 1430 285 1405C288 1385 300 1375 320 1374ZM412 1242H475C485 1245 488 1255 488 1268C486 1285 480 1290 470 1291H415C402 1288 400 1280 400 1265C400 1250 404 1244 412 1242ZM506 947L541 983V1032M468 998L498 1046L527 1046M550 1065L584 1134M582 1170L546 1226M510 1228C530 1210 560 1230 545 1275"/><ellipse cx="438" cy="1031" rx="11" ry="14"/><ellipse cx="541" cy="1048" rx="13" ry="17"/><ellipse cx="591" cy="1153" rx="13" ry="18"/><ellipse cx="370" cy="1291" rx="12" ry="17"/><ellipse cx="512" cy="1282" rx="7" ry="9"/><ellipse cx="318" cy="1418" rx="18" ry="24"/><ellipse cx="373" cy="1416" rx="23" ry="30"/><ellipse cx="436" cy="1416" rx="24" ry="30"/><ellipse cx="498" cy="1416" rx="24" ry="30"/><ellipse cx="557" cy="1418" rx="20" ry="26"/>
      <path d="M695 1190C690 1110 730 1058 790 1058C850 1060 885 1110 886 1170C885 1200 880 1220 874 1235M718 1132C720 1125 740 1122 800 1122C815 1125 820 1135 818 1155V1200C810 1220 770 1222 730 1218C715 1210 712 1190 714 1165ZM740 1122L750 1108L760 1122M818 1140L845 1108C855 1130 852 1150 848 1170M835 1145L845 1125V1145ZM775 1138H798V1148H775ZM738 1235C750 1260 775 1250 782 1232C790 1255 820 1260 832 1232M712 1222C700 1240 710 1275 740 1290C780 1300 830 1300 848 1270M820 1180C800 1185 810 1220 830 1215C848 1240 848 1280 845 1308M820 1180C840 1165 860 1200 874 1235C900 1300 905 1380 900 1440C890 1500 850 1520 770 1515C710 1500 680 1470 678 1400C675 1350 690 1300 724 1270M685 1340C670 1290 665 1240 685 1210C675 1190 705 1175 708 1200C710 1240 695 1270 712 1280M698 1352C720 1310 770 1305 788 1352M850 1448C810 1450 815 1485 800 1488C780 1485 775 1510 785 1520C775 1540 800 1545 810 1540C850 1530 880 1520 895 1470M680 1450C655 1500 640 1510 628 1500C615 1510 625 1530 618 1540C615 1560 640 1560 640 1555C660 1530 690 1515 718 1505M890 1470C910 1500 914 1540 914 1570M882 1495L884 1570"/><ellipse cx="749" cy="1174" rx="19" ry="28"/><ellipse cx="749" cy="1174" rx="11" ry="17"/>
      <path d="M960 1050C975 1020 1000 1015 1015 1030C1030 1070 1055 1090 1053 1120C1050 1145 1045 1165 1030 1160C1015 1150 1020 1130 1005 1120C975 1125 945 1090 960 1050ZM1000 1060C1015 1080 1000 1110 985 1108M1025 1075C1010 1080 1015 1095 1028 1095M1025 1110C1012 1118 1018 1130 1028 1130"/><ellipse cx="979" cy="1076" rx="14" ry="22"/>
      <path d="M1148 1025C1165 980 1220 975 1240 1010C1265 1060 1265 1110 1235 1130M1142 1040C1135 1090 1150 1135 1200 1140M1135 975C1130 1010 1150 1050 1185 1105L1198 1118M1145 952H1135V975M1260 998L1230 1078M1265 1018C1320 1010 1320 1040 1270 1070C1230 1095 1170 1110 1138 1115M1138 1052C1090 1070 1085 1110 1112 1112M1160 1080C1130 1150 1130 1200 1148 1190C1170 1180 1200 1140 1212 1110M1210 1135C1250 1190 1270 1190 1275 1180C1278 1160 1268 1130 1258 1110M1220 978C1245 940 1265 940 1265 965M1175 975L1182 982"/><ellipse cx="1164" cy="964" rx="9" ry="12"/><ellipse cx="1259" cy="983" rx="12" ry="16"/><ellipse cx="1124" cy="1115" rx="11" ry="15"/>
      <ellipse cx="1047" cy="1291" rx="11" ry="15"/><ellipse cx="999" cy="1413" rx="10" ry="14"/><ellipse cx="1181" cy="1427" rx="12" ry="16"/><ellipse cx="1082" cy="1499" rx="11" ry="15"/><path d="M1056 1300L1172 1415M1042 1305L1003 1398M1008 1422L1073 1488M1092 1492L1172 1438M1082 1514V1568"/>
      <path d="M1430 1190C1440 1150 1470 1130 1500 1130C1525 1130 1530 1150 1530 1180C1530 1220 1520 1250 1510 1265C1495 1320 1510 1400 1498 1440L1425 1392M1430 1190C1410 1230 1380 1250 1340 1262C1320 1275 1310 1300 1312 1300L1390 1368L1350 1382L1398 1250M1430 1212L1378 1335M1450 1282L1384 1408L1405 1420L1452 1280M1498 1265L1446 1390M1512 1265L1438 1450L1422 1420L1425 1392M1490 1130C1495 1150 1510 1165 1530 1165M1450 1155C1480 1155 1510 1175 1525 1215M1440 1170C1470 1165 1505 1190 1522 1228M1430 1185C1465 1180 1500 1205 1515 1242M1345 1270C1380 1262 1400 1250 1412 1235"/>
      <path d="M1482 1314L1514 1256L1494 1382M1515 1280C1520 1265 1540 1262 1556 1268L1568 1290M1515 1280L1518 1380C1525 1392 1550 1390 1568 1375M1568 862C1530 850 1500 880 1500 920C1480 960 1495 1000 1530 1005L1568 1008M1568 880C1530 870 1515 890 1512 920C1495 950 1505 980 1540 990L1568 992" /><ellipse cx="1544" cy="903" rx="10" ry="12"/><ellipse cx="1522" cy="952" rx="9" ry="11"/>`
  },
  {
    ox: 280, oy: 880, kx: 2.221, ky: 2.947,
    dots: [[183,260],[445,297],[637,199],[827,217],[1077,157],[1258,14],[358,762],[557,706],[1289,507],[1312,629],[1497,706],[1095,1096],[1293,1244],[1333,1447],[1138,1473],[223,681,5],[288,704,5.5],[299,800,5],[307,975,6],[206,875,6]],
    stars: [[733,90,31,-12,1],[400,205,17,-8],[738,268,17,15],[1375,97,24,22],[1297,367,17,22],[230,583,17,20],[383,605,31,10,1],[1237,690,17,22],[728,797,16,-4],[394,880,20,-3],[530,928,17,22],[1002,887,21,15],[1418,742,21,18],[242,1043,17,22],[953,1085,17,22],[1194,1012,22,3],[1233,1143,17,-8],[1413,1283,31,-14,1],[1282,1357,15,-10],[1420,1450,15,-10],[285,1495,18,30]],
    art: `
      <path d="M189 98C190 50 220 5 265 0C305 5 335 50 338 98M208 98C210 60 225 20 245 5M230 98C232 50 245 10 262 2C280 10 298 50 300 98M320 98C318 60 300 20 285 8M180 98H343C350 105 350 115 343 120H182C175 115 175 105 180 98ZM185 120V209H338V120M203 207V165H230V207M248 207V142H276V207M294 207V165H322V207M202 149H230M246 131H278M294 149H322M324 35L342 5M340 20C350 25 358 15 355 0"/>
      <path d="M430 0C420 90 440 180 523 185C600 180 620 100 613 0M470 12C490 15 465 45 448 40C440 60 470 55 470 62C445 65 435 85 450 92C470 90 475 60 490 65C500 80 505 95 518 95C525 90 515 60 530 45C545 40 540 70 555 68C570 60 570 30 590 20M503 175C505 160 500 155 490 140C485 115 505 125 515 118C520 105 525 85 540 88C555 95 545 110 560 120C580 115 580 130 572 145L568 175"/><path d="M430 0C440 -55 475 -85 523 -85C570 -85 605 -55 613 0"/><ellipse cx="594" cy="82" rx="10" ry="15"/>
      <path d="M870 0C840 50 810 90 818 130C830 165 870 145 880 110C900 70 915 40 915 0M871 156L1032 96L986 269L942 222L921 249L910 182ZM910 182L1010 115L930 208L942 222M930 208L921 249M1082 0V36M1090 58L1154 98M1228 92L1248 82L1262 155L1292 142L1279 246L1225 174L1246 164Z"/><ellipse cx="1081" cy="50" rx="10" ry="14"/><ellipse cx="1164" cy="103" rx="10" ry="14"/>
      <path stroke-dasharray="5 5" d="M1408 82C1440 40 1510 20 1568 35M1415 80C1460 60 1520 60 1560 110"/>
      <path d="M966 325C1000 290 1070 280 1120 288C1190 305 1250 380 1265 455C1180 460 1030 410 966 325ZM966 325C980 380 1000 410 1030 430M1048 450L1085 478M1112 500L1170 495M1190 498C1230 500 1260 480 1265 455M1106 283L1110 202L1135 212L1126 268L1145 272L1160 192L1184 202L1165 280L1180 292L1195 240L1216 258L1186 325M985 460L1028 418C1045 415 1052 430 1045 450L1000 490M1088 556L1092 468C1100 455 1115 460 1118 475L1098 560M1165 490C1170 468 1190 470 1192 485L1212 568M1165 490L1196 568M1118 475V495"/><ellipse cx="1063" cy="341" rx="16" ry="22"/><ellipse cx="1124" cy="370" rx="16" ry="22"/><ellipse cx="1179" cy="392" rx="16" ry="22"/><ellipse cx="1091" cy="569" rx="11" ry="14"/><ellipse cx="1203" cy="578" rx="11" ry="14"/>
      <ellipse cx="1466" cy="288" rx="109" ry="129"/><path d="M1398 330C1390 290 1395 260 1400 235C1410 235 1425 245 1432 255C1450 245 1485 245 1500 255C1510 240 1525 228 1535 228C1540 260 1540 300 1535 330M1408 270C1405 255 1410 252 1425 262ZM1515 262L1530 252L1528 275ZM1420 308C1425 290 1436 292 1438 308M1495 308C1500 290 1512 292 1516 308M1458 294C1465 288 1475 290 1478 294L1467 306ZM1467 306V330M1455 338C1465 348 1480 340 1478 328M1402 325L1434 330M1402 342L1434 338M1410 355L1430 346M1500 328L1540 325M1500 338L1535 342M1505 345L1530 358M1375 370C1360 430 1350 520 1360 580C1370 630 1385 640 1402 632C1410 620 1412 610 1420 612C1450 625 1490 625 1520 610C1530 640 1545 640 1568 640M1382 422C1382 450 1400 460 1420 465M1375 482C1390 500 1410 505 1422 495M1550 420C1548 445 1530 462 1515 465M1405 555C1430 610 1500 610 1535 560M1420 480L1442 452L1447 500L1425 490M1447 478H1510M1458 460V496M1468 458L1472 500M1480 458L1484 500M1500 470C1510 455 1525 465 1520 480C1515 495 1505 490 1500 480"/>
      <path d="M758 595C750 540 790 500 860 498C930 500 975 570 965 640C955 720 910 770 855 770C790 765 750 690 758 595ZM765 560C760 530 775 515 795 515C805 525 800 550 785 570L782 590M800 530L818 560M862 560C870 535 900 540 910 555C905 575 875 578 862 560M855 565L842 582M880 575L875 596M895 575L905 596M908 568L924 580M885 690C900 665 935 670 930 685C925 705 900 712 885 690M885 680L866 676M885 692L865 696M910 670L900 650M925 668L938 642M965 598L980 608C975 625 970 635 980 660L965 670"/><ellipse cx="799" cy="634" rx="16" ry="13"/><ellipse cx="833" cy="680" rx="17" ry="17"/>
      <path d="M487 323C485 260 500 235 520 235C560 240 590 280 615 323M490 292C520 275 550 280 580 283M495 310C520 295 560 290 590 298M660 323L665 308L684 323M460 513C465 535 475 545 490 536M528 513C530 540 545 553 578 550C620 548 640 530 650 513M578 550V585C610 590 650 570 668 516M545 550C600 555 640 540 660 515M480 555L484 636M488 545L508 654M500 545L533 616M615 600L639 745M626 598L648 688M650 618L700 752M660 592L716 690M668 576L704 624"/>
      <path d="M234 685L275 698M290 722L297 785M290 812L216 866M303 815L309 960M216 886L298 965"/>
      <text transform="translate(402 788) rotate(14) scale(2.06 2.75)">Ɛ=mc²</text>
      <path d="M668 930C640 925 630 895 645 882C665 875 685 900 705 915C735 945 760 960 767 925C760 890 730 905 700 915Z"/>
      <ellipse cx="1044" cy="619" rx="11" ry="15"/><ellipse cx="1164" cy="712" rx="11" ry="15"/><ellipse cx="1000" cy="753" rx="11" ry="15"/><ellipse cx="962" cy="774" rx="10" ry="14"/><ellipse cx="882" cy="820" rx="11" ry="14"/><ellipse cx="1127" cy="939" rx="11" ry="15"/><ellipse cx="1044" cy="1012" rx="11" ry="15"/><ellipse cx="1039" cy="1086" rx="11" ry="15"/><path d="M1040 635L1005 738M1052 628L1154 704M1042 635L1124 924M1163 728L1134 922M990 760L972 768M952 782L892 814M1118 948L1052 1002M1042 1028L1040 1070"/>
      <path d="M1340 772C1290 765 1230 790 1200 835C1180 870 1185 895 1205 898C1250 905 1310 860 1335 820C1345 790 1320 785 1290 795C1250 815 1220 850 1225 870C1240 885 1290 860 1310 830C1312 805 1270 815 1245 850M1205 845C1200 865 1195 880 1210 885M1350 790C1365 810 1355 840 1342 858M1208 920C1250 925 1310 895 1340 855M1262 838C1270 820 1290 825 1280 835"/>
      <ellipse cx="816" cy="884" rx="14" ry="18"/><ellipse cx="908" cy="902" rx="14" ry="18"/><path d="M822 902L832 935M830 898L840 932M895 915L880 940M902 920L888 946M802 950C830 925 900 930 907 975C905 1030 875 1065 855 1105L852 1135C868 1140 868 1150 860 1150L838 1145L842 1108L822 1105L820 1142L795 1140C788 1135 795 1128 812 1130L815 1095C795 1050 785 970 802 950ZM826 1058C826 1085 845 1080 845 1062"/><ellipse cx="848" cy="996" rx="29" ry="41"/><circle cx="849" cy="998" r="7"/>
      <ellipse cx="646" cy="1087" rx="112" ry="125"/><path d="M585 1075C582 1050 588 1035 595 1032C605 1040 615 1048 620 1058C640 1050 665 1050 680 1058C688 1045 700 1032 708 1032C715 1050 715 1065 712 1080M598 1070L600 1045L612 1062ZM690 1060L705 1046V1070ZM585 1075C570 1090 562 1110 562 1135C565 1180 600 1210 646 1212C695 1210 730 1180 733 1135C733 1110 725 1090 712 1080M588 1118C590 1095 605 1098 610 1115M685 1115C690 1095 705 1098 708 1118M640 1104C645 1100 655 1100 660 1106L649 1116ZM649 1116V1135M615 1130C615 1160 645 1160 649 1135C655 1160 683 1158 682 1132M550 1135L600 1130M556 1150L602 1142M700 1130L740 1138M696 1142L735 1150M440 1213C430 1150 500 1110 502 1055C498 1010 460 1010 430 1040C390 1090 390 1160 402 1213M468 1213C500 1200 560 1210 580 1195"/>
      <path d="M418 970L358 1076C300 1090 250 1150 238 1190L246 1213M358 1076C370 1100 370 1160 362 1213M305 1122C320 1100 340 1092 352 1095C355 1120 352 1145 348 1160"/><ellipse cx="264" cy="1190" rx="10" ry="13"/>
      <path d="M1055 1240C1075 1195 1130 1200 1150 1240C1175 1290 1170 1340 1140 1360M1055 1265C1050 1310 1065 1345 1100 1350M1058 1175H1042V1200C1045 1250 1080 1310 1110 1342M1168 1220L1142 1298M1172 1240C1225 1230 1225 1270 1180 1295C1140 1315 1080 1325 1042 1332M1045 1275C1020 1290 1005 1310 1010 1322M1070 1300C1035 1370 1040 1425 1055 1412C1075 1400 1110 1350 1120 1325M1118 1355C1155 1410 1175 1412 1183 1400C1185 1380 1175 1350 1165 1330M1130 1200C1150 1165 1170 1160 1172 1185"/><ellipse cx="1073" cy="1188" rx="9" ry="12"/><ellipse cx="1168" cy="1205" rx="12" ry="16"/><ellipse cx="1032" cy="1334" rx="11" ry="15"/>
      <path d="M1297 1030C1290 960 1305 920 1330 908C1370 895 1410 885 1430 900C1450 930 1450 990 1458 1040C1420 1045 1390 1060 1370 1105L1320 1125C1305 1100 1300 1060 1297 1030ZM1297 1030C1340 1030 1355 1015 1370 1010M1355 905C1345 960 1350 1050 1370 1105M1310 1000C1305 960 1310 945 1320 940M1368 912L1372 975M1395 905L1408 990L1365 1010M1408 908L1420 995L1365 1028M1415 892L1448 866L1540 884L1568 1030M1448 866L1475 1035M1452 900L1545 915M1458 928L1550 940M1488 872V845L1500 840L1505 875M1510 878L1506 805L1522 800L1530 882M1320 1125L1322 1140L1395 1120M1302 1110C1300 1150 1320 1172 1340 1168C1355 1160 1362 1145 1362 1130M1475 1035C1490 1020 1520 1005 1550 1010"/><ellipse cx="1318" cy="1066" rx="7" ry="14"/><ellipse cx="1341" cy="1060" rx="7" ry="14"/><ellipse cx="1428" cy="1107" rx="30" ry="40"/><ellipse cx="1428" cy="1107" rx="15" ry="20"/><ellipse cx="1489" cy="1080" rx="30" ry="40"/><ellipse cx="1489" cy="1080" rx="15" ry="20"/><ellipse cx="1547" cy="1058" rx="30" ry="40"/><ellipse cx="1547" cy="1058" rx="15" ry="20"/>
      <ellipse cx="1547" cy="1207" rx="57" ry="76"/><path d="M1568 1210C1530 1215 1510 1250 1520 1275M1520 1250L1568 1225M1525 1270L1568 1245M1542 1327L1516 1383L1490 1395V1425L1505 1445L1530 1447L1544 1420L1538 1390L1516 1383M1222 1437L1302 1488L1280 1542L1240 1525L1250 1545M1222 1437L1208 1480L1240 1525M1538 1495L1568 1505"/>
      <path d="M790 1310C795 1250 820 1210 850 1208C870 1208 885 1212 895 1220M808 1310C810 1265 825 1230 845 1212M780 1310H820M778 1328H820M780 1310C768 1312 768 1326 778 1328V1420H815M795 1420V1358H812M905 1205L915 1175L948 1215L940 1225M790 1568C790 1530 840 1500 880 1530C900 1490 960 1480 994 1480C980 1490 970 1490 950 1510C970 1512 975 1515 975 1520C955 1530 960 1550 945 1568M805 1568C810 1540 850 1530 875 1545C890 1555 895 1560 895 1568M1000 1540C1000 1510 1050 1500 1090 1515C1130 1530 1160 1550 1175 1568M1015 1568C1020 1535 1060 1530 1110 1568M1395 1568C1410 1530 1440 1515 1470 1520C1510 1525 1535 1550 1540 1568M400 1498L442 1532M495 1568C500 1530 540 1518 570 1530M552 1568C565 1510 620 1495 660 1520C680 1535 688 1550 688 1568M0 1500C50 1490 90 1510 85 1568M15 1568L60 1535M110 1568C140 1545 190 1540 225 1568"/><ellipse cx="451" cy="1540" rx="10" ry="13"/><ellipse cx="599" cy="1552" rx="10" ry="13"/><ellipse cx="635" cy="1550" rx="10" ry="12"/>`
  },
  {
    ox: 370, oy: 940, kx: 2.24, ky: 3,
    dots: [[247,124],[732,230],[1098,337],[23,182,7]],
    stars: [[548,105,19,30],[1108,193,17,22]],
    art: `
      <ellipse cx="125" cy="217" rx="71" ry="95"/><path d="M178 135C215 125 225 160 200 200C160 260 80 310 40 295C20 280 25 250 42 238"/><ellipse cx="47" cy="134" rx="8" ry="10"/><ellipse cx="220" cy="228" rx="8" ry="10"/>
      <path d="M292 90C285 150 295 270 342 382C400 385 450 350 477 290C465 220 430 150 375 90M292 130C310 110 350 100 395 110M292 155C320 125 370 115 405 125M335 358C390 355 440 320 470 262M346 382H382C430 375 460 345 475 345L460 325M382 385V402C430 395 465 370 475 345M463 130C455 150 470 190 492 220L515 208C515 170 480 130 463 130ZM492 220L498 225L520 212L515 208M452 195L475 186M458 218L482 208M252 268C245 300 255 340 272 370L295 355C295 320 270 280 252 268ZM280 300L304 284M288 328L314 318M506 230L530 306M516 228L568 300M525 222L568 264"/><ellipse cx="371" cy="236" rx="37" ry="49"/><ellipse cx="371" cy="236" rx="25" ry="35"/>
      <path d="M632 110C660 90 700 100 702 140C695 180 670 190 665 210C640 235 610 230 598 210C590 180 620 170 622 150C620 130 625 120 632 110ZM640 145C650 165 670 165 680 155M618 195C618 175 635 175 633 190M645 192C645 175 660 178 660 190"/><ellipse cx="662" cy="132" rx="17" ry="20"/>`
  }
];

function starPath(cx, cy, r, rot) {
  let d = '';
  for (let i = 0; i < 10; i++) {
    const rad = i % 2 ? r * 0.5 : r;
    const a = (rot + i * 36 - 90) * Math.PI / 180;
    d += (i ? 'L' : 'M') + (cx + rad * Math.cos(a)).toFixed(1) + ' ' + (cy + rad * Math.sin(a)).toFixed(1);
  }
  return '<path d="' + d + 'Z"/>';
}

function drawSheet(s) {
  const px = x => s.ox + x / s.kx;
  const py = y => s.oy + y / s.ky;
  let out = '<g transform="translate(' + s.ox + ' ' + s.oy + ') scale(' + 1 / s.kx + ' ' + 1 / s.ky + ')">' + s.art + '</g>';
  for (const [x, y, r = 8] of s.dots) {
    out += '<circle cx="' + px(x) + '" cy="' + py(y) + '" r="' + r + '"/>';
  }
  for (const [x, y, r, rot, inner] of s.stars) {
    out += starPath(px(x), py(y), r, rot);
    if (inner) out += starPath(px(x), py(y), r * 0.45, rot);
  }
  return out;
}

const tile = sheets.map(drawSheet).join('');
document.getElementById('wallpaper').innerHTML =
  '<g>' + tile + '</g><g transform="translate(1020 0)">' + tile + '</g>';
```
